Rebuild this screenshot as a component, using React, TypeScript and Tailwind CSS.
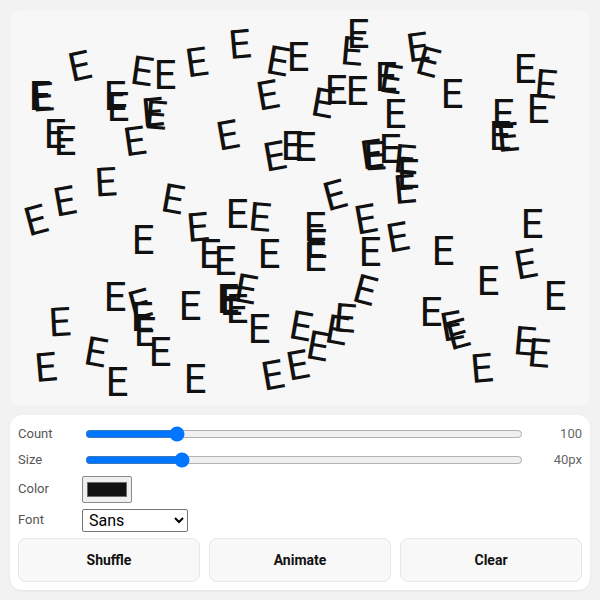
import React from "react";

const ES: [number, number, number][] = [
  [240, 45, -5], [358, 35, 0], [352, 52, 5], [418, 48, -8], [428, 63, 15],
  [298, 58, 0], [278, 62, 10], [197, 63, -8], [80, 67, -12], [142, 72, 8],
  [165, 76, 0], [525, 70, 0], [546, 85, 5], [452, 95, 0], [40, 97, 0],
  [43, 98, -4], [115, 97, 0], [118, 108, 0], [153, 113, -5], [156, 116, 5],
  [268, 96, -10], [323, 104, 10], [336, 91, 0], [357, 92, 0], [386, 78, 0],
  [391, 80, 8], [395, 115, 0], [503, 115, 0], [500, 137, 0], [508, 138, -5],
  [538, 110, 0], [55, 135, 0], [65, 142, 0], [135, 142, -8], [228, 136, -10],
  [275, 157, -10], [292, 147, 0], [305, 148, 0], [372, 155, -8], [375, 157, -3],
  [390, 150, 0], [405, 160, 5], [408, 175, 0], [405, 190, -5], [106, 183, -3],
  [65, 202, -10], [36, 221, -15], [173, 200, 10], [143, 241, 0], [198, 228, -5],
  [210, 255, 0], [225, 262, 0], [237, 215, 0], [260, 218, 5],
  [335, 196, -15], [315, 228, 0], [316, 245, 0], [315, 258, 0], [366, 220, -10],
  [269, 255, 0], [370, 253, 0], [398, 238, -10], [532, 225, 0], [443, 252, 0],
  [526, 265, -10], [488, 282, 0], [555, 297, 0], [365, 291, 15], [115, 298, 0],
  [140, 305, -15], [142, 318, 0], [145, 333, 0], [190, 307, 0], [60, 323, -3],
  [46, 368, -5], [96, 353, 10], [117, 383, 0], [160, 353, 0], [195, 380, 0],
  [228, 300, 0], [231, 302, 0], [246, 290, 10], [237, 310, 0], [259, 330, 0],
  [301, 327, 10], [318, 347, 10], [337, 331, 10], [345, 319, 5], [273, 376, -10],
  [298, 366, -10], [431, 313, 0], [452, 327, -10], [458, 335, -15], [482, 369, -5],
  [525, 342, 5], [539, 354, 5],
];

export default function App() {
  return (
    <div
      className="w-[600px] h-[600px] bg-[#f2f2f2] p-[10px] flex flex-col gap-[10px]"
      style={{ fontFamily: "Roboto, 'Liberation Sans', sans-serif" }}
    >
      <div className="relative h-[395px] shrink-0 rounded-[10px] bg-[#f7f7f7] overflow-hidden">
        {ES.map(([x, y, r], i) => (
          <span
            key={i}
            className="absolute text-[40px] leading-none text-[#111] select-none"
            style={{
              left: x - 10,
              top: y - 10,
              transform: `translate(-50%, -50%) rotate(${r}deg)`,
            }}
          >
            E
          </span>
        ))}
      </div>

      <div className="flex-1 rounded-[12px] bg-white shadow-[0_1px_3px_rgba(0,0,0,0.06)] px-[8px] pt-[8px] pb-[8px] flex flex-col gap-[4px]">
        <div className="flex items-center h-[22px]">
          <span className="w-[64px] text-[13px] text-[#555]">Count</span>
          <div className="flex-1 flex items-center">
            <input
              type="range"
              min={1}
              max={500}
              defaultValue={100}
              className="w-full mx-[3px] h-[16px]"
            />
          </div>
          <span className="w-[56px] text-right text-[13px] text-[#666]">100</span>
        </div>
        <div className="flex items-center h-[22px]">
          <span className="w-[64px] text-[13px] text-[#555]">Size</span>
          <div className="flex-1 flex items-center">
            <input
              type="range"
              min={8}
              max={160}
              defaultValue={40}
              className="w-full mx-[3px] h-[16px]"
            />
          </div>
          <span className="w-[56px] text-right text-[13px] text-[#666]">40px</span>
        </div>
        <div className="flex items-center h-[28px]">
          <span className="w-[64px] text-[13px] text-[#555]">Color</span>
          <div className="w-[50px] h-[27px] border border-[#8a8a8a] rounded-[2px] bg-[#efefef] flex items-center justify-center">
            <div className="w-[40px] h-[15px] bg-[#111] border border-[#6b6b6b]" />
          </div>
        </div>
        <div className="flex items-center h-[26px]">
          <span className="w-[64px] text-[13px] text-[#555]">Font</span>
          <select
            defaultValue="sans"
            className="w-[106px] h-[23px] border border-[#767676] rounded-[2px] bg-white text-[16px] text-black pl-[2px]"
          >
            <option value="sans">Sans</option>
            <option value="serif">Serif</option>
            <option value="mono">Mono</option>
          </select>
        </div>
        <div className="mt-[1px] grid grid-cols-3 gap-[9px] h-[44px]">
          {["Shuffle", "Animate", "Clear"].map((t) => (
            <button
              key={t}
              className="rounded-[8px] border border-[#e6e6e6] bg-[#f8f8f8] text-[14px] font-bold text-[#111]"
            >
              {t}
            </button>
          ))}
        </div>
      </div>
    </div>
  );
}
